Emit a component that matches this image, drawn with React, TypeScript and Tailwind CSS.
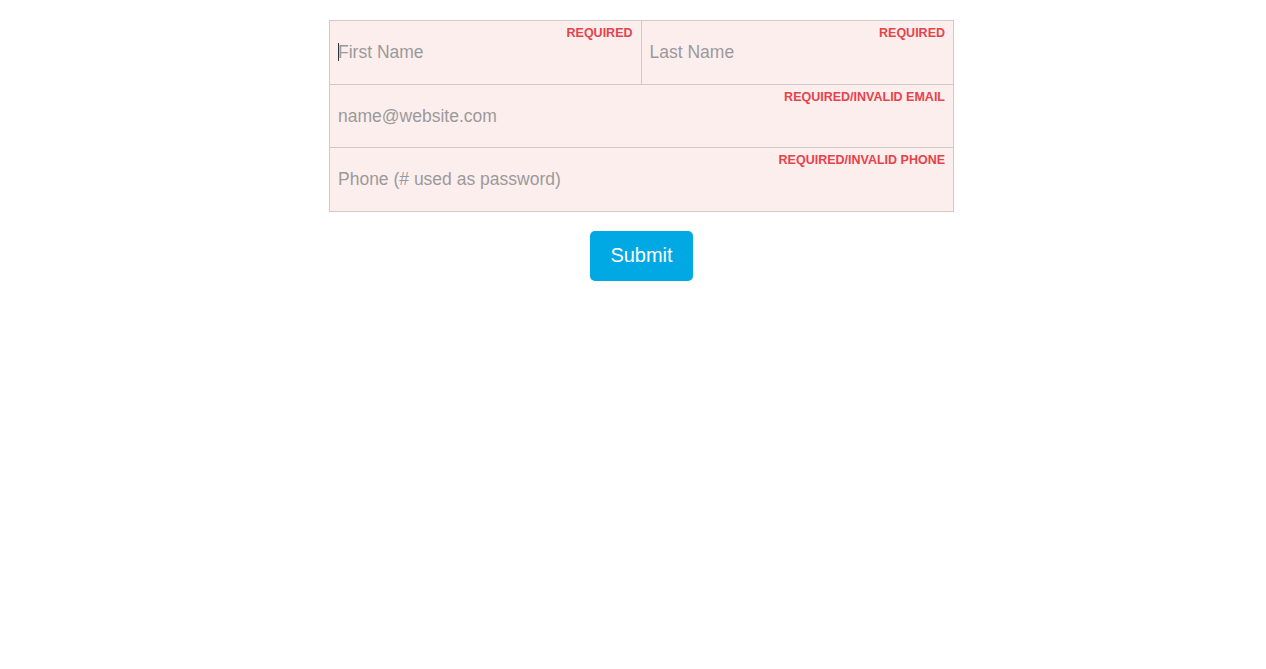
import React from "react";

function Field({
  placeholder,
  label,
  className = "",
  caret = false,
}: {
  placeholder: string;
  label: string;
  className?: string;
  caret?: boolean;
}) {
  return (
    <div className={`relative h-full bg-[#fdeeee] ${className}`}>
      <span className="pointer-events-none absolute right-[8px] top-[6px] text-[12.5px] font-bold leading-none text-[#e8414a]">
        {label}
      </span>
      {caret && (
        <span className="pointer-events-none absolute left-[8px] top-[22px] h-[18px] w-px bg-[#333]" />
      )}
      <input
        placeholder={placeholder}
        className="h-full w-full bg-transparent px-[8px] text-[17.5px] text-[#444] outline-none placeholder:text-[#9a9a9a]"
      />
    </div>
  );
}

export default function App() {
  return (
    <div className="min-h-screen bg-white pl-[17px] pt-[20px] font-['Liberation_Sans',Arial,sans-serif]">
      <div className="mx-auto w-[625px]">
        <div className="border border-[#d0c9c9]">
          <div className="grid h-[64px] grid-cols-2 border-b border-[#d0c9c9]">
            <Field
              placeholder="First Name"
              label="REQUIRED"
              className="border-r border-[#d0c9c9]"
              caret
            />
            <Field placeholder="Last Name" label="REQUIRED" />
          </div>
          <div className="h-[63px] border-b border-[#d0c9c9]">
            <Field placeholder="name@website.com" label="REQUIRED/INVALID EMAIL" />
          </div>
          <div className="h-[63px]">
            <Field placeholder="Phone (# used as password)" label="REQUIRED/INVALID PHONE" />
          </div>
        </div>
        <div className="mt-[19px] flex justify-center">
          <button className="h-[50px] w-[103px] rounded-[5px] bg-[#00a8e4] pb-[2px] text-[20px] text-white">
            Submit
          </button>
        </div>
      </div>
    </div>
  );
}
